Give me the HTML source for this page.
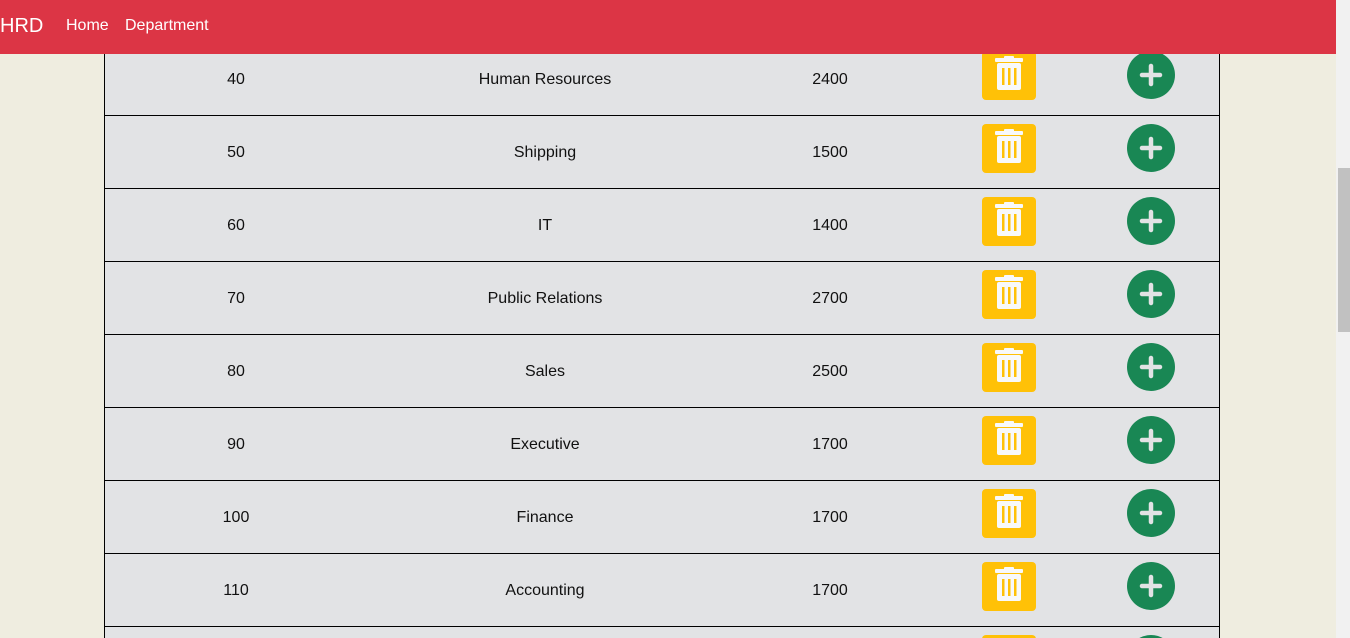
<!DOCTYPE html><html style="overflow:hidden;height:638px"><head><style>
body{margin:0;width:1350px;height:638px;overflow:hidden;background:#efede0;font-family:"Liberation Sans",sans-serif;position:relative}
#rows{position:absolute;left:0;top:0;width:1350px;height:638px;overflow:hidden}
.nav{position:absolute;left:0;top:0;width:1336px;height:54px;background:#dc3545;color:#fff;z-index:5}
.nav span{position:absolute;top:17px;font-size:16px}
.sb{position:absolute;left:1336px;top:0;width:14px;height:638px;background:#f1f1f1;z-index:6}
.th{position:absolute;left:2px;top:168px;width:12px;height:164px;background:#c1c1c1}
.row{position:absolute;left:104px;width:1114px;height:72px;background:#e2e3e5;border:1px solid #000;border-top:none;border-bottom:1px solid #000}
.c{position:absolute;top:28px;font-size:16px;color:#111;transform:translateX(-50%);white-space:nowrap}
.t{position:absolute;left:877px;top:8px;width:54px;height:49px;background:#ffc107;border-radius:4px}
.p{position:absolute;left:1022px;top:8px;width:48px;height:48px;border-radius:50%;background:#198754}
</style></head><body>
<div class="nav"><span style="left:0;font-size:20px;top:15px">HRD</span><span style="left:66px">Home</span><span style="left:125px">Department</span></div>
<div id="rows"></div>
<script>
var d=[["40","Human Resources","2400"],["50","Shipping","1500"],["60","IT","1400"],["70","Public Relations","2700"],["80","Sales","2500"],["90","Executive","1700"],["100","Finance","1700"],["110","Accounting","1700"],["","",""]];
var tr='<svg width="54" height="49" style="position:absolute;left:0;top:0"><rect x="13" y="7" width="28" height="4" rx="1" fill="#f8f9fa"/><rect x="22" y="5" width="10" height="3" rx="1" fill="#f8f9fa"/><rect x="15" y="12" width="24" height="27" rx="2" fill="#f8f9fa"/><rect x="20" y="17" width="2.5" height="17" fill="#ffc107"/><rect x="26" y="17" width="2.5" height="17" fill="#ffc107"/><rect x="32" y="17" width="2.5" height="17" fill="#ffc107"/></svg>';
var pl='<svg width="48" height="48" style="position:absolute;left:0;top:0"><path d="M15 24H33M24 15V33" stroke="#e2e3e5" stroke-width="4.5" stroke-linecap="round"/></svg>';
var h='';d.forEach(function(r,i){var top=43+i*73;h+='<div class="row" style="top:'+top+'px"><div class="c" style="left:131px">'+r[0]+'</div><div class="c" style="left:440px">'+r[1]+'</div><div class="c" style="left:725px">'+r[2]+'</div><div class="t">'+tr+'</div><div class="p">'+pl+'</div></div>';});
document.getElementById('rows').innerHTML=h;
</script>
<div class="sb"><div class="th"></div></div>
</body></html>
